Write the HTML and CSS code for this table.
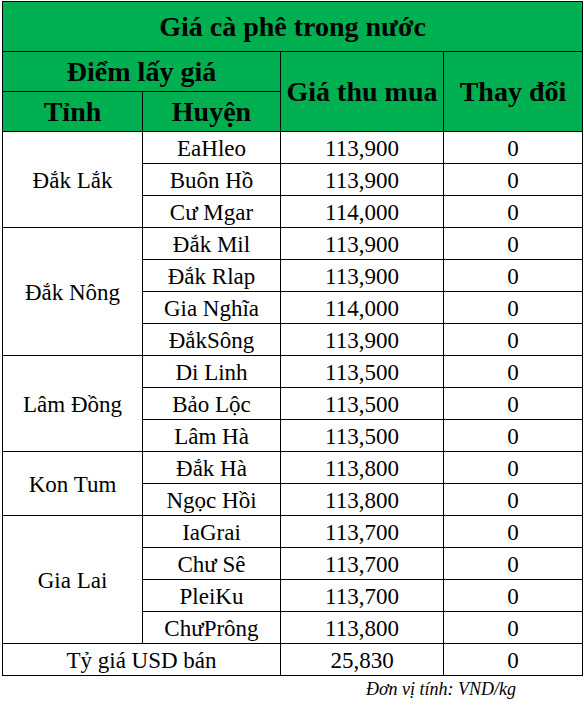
FILE: index.html
```html
<!DOCTYPE html>
<html lang="vi">
<head>
<meta charset="utf-8">
<title>Giá cà phê trong nước</title>
<link rel="stylesheet" href="styles.css">
</head>
<body>
<div class="page">
<table class="price-table">
  <colgroup>
    <col class="c-tinh"><col class="c-huyen"><col class="c-gia"><col class="c-doi">
  </colgroup>
  <thead>
    <tr class="r-title"><th colspan="4">Giá cà phê trong nước</th></tr>
    <tr class="r-head"><th colspan="2">Điểm lấy giá</th><th rowspan="2">Giá thu mua</th><th rowspan="2">Thay đổi</th></tr>
    <tr class="r-head"><th>Tỉnh</th><th>Huyện</th></tr>
  </thead>
  <tbody>
    <tr><td rowspan="3">Đắk Lắk</td><td>EaHleo</td><td>113,900</td><td>0</td></tr>
    <tr><td>Buôn Hồ</td><td>113,900</td><td>0</td></tr>
    <tr><td>Cư Mgar</td><td>114,000</td><td>0</td></tr>
    <tr><td rowspan="4">Đắk Nông</td><td>Đắk Mil</td><td>113,900</td><td>0</td></tr>
    <tr><td>Đắk Rlap</td><td>113,900</td><td>0</td></tr>
    <tr><td>Gia Nghĩa</td><td>114,000</td><td>0</td></tr>
    <tr><td>ĐắkSông</td><td>113,900</td><td>0</td></tr>
    <tr><td rowspan="3">Lâm Đồng</td><td>Di Linh</td><td>113,500</td><td>0</td></tr>
    <tr><td>Bảo Lộc</td><td>113,500</td><td>0</td></tr>
    <tr><td>Lâm Hà</td><td>113,500</td><td>0</td></tr>
    <tr><td rowspan="2">Kon Tum</td><td>Đắk Hà</td><td>113,800</td><td>0</td></tr>
    <tr><td>Ngọc Hồi</td><td>113,800</td><td>0</td></tr>
    <tr><td rowspan="4">Gia Lai</td><td>IaGrai</td><td>113,700</td><td>0</td></tr>
    <tr><td>Chư Sê</td><td>113,700</td><td>0</td></tr>
    <tr><td>PleiKu</td><td>113,700</td><td>0</td></tr>
    <tr><td>ChưPrông</td><td>113,800</td><td>0</td></tr>
    <tr><td colspan="2">Tỷ giá USD bán</td><td>25,830</td><td>0</td></tr>
  </tbody>
</table>
<p class="unit">Đơn vị tính: VND/kg</p>
</div>
</body>
</html>
```
FILE: styles.css
```css
html, body {
  margin: 0;
  padding: 0;
  background: #ffffff;
}
.page {
  width: 584px;
  padding: 1px 0 0 2px;
  font-family: "Liberation Serif", "Times New Roman", serif;
  color: #000;
}
.price-table {
  border-collapse: collapse;
  table-layout: fixed;
  width: 580px;
}
.c-tinh { width: 140px; }
.c-huyen { width: 138px; }
.c-gia { width: 163px; }
.c-doi { width: 139px; }
.price-table th,
.price-table td {
  border: 1px solid #000;
  padding: 0;
  text-align: center;
  vertical-align: middle;
  white-space: nowrap;
  overflow: hidden;
}
.price-table th {
  background: #00b050;
  font-weight: bold;
  font-size: 28px;
  line-height: 30px;
}
.r-title th { height: 49px; }
.r-head th { height: 39px; }
.price-table td {
  font-size: 23px;
  line-height: 26px;
  height: 29px;
  padding-top: 2px;
}
.unit {
  margin: 3px 0 0 0;
  width: 514px;
  text-align: right;
  font-style: italic;
  font-size: 18px;
  line-height: 20px;
}
```
